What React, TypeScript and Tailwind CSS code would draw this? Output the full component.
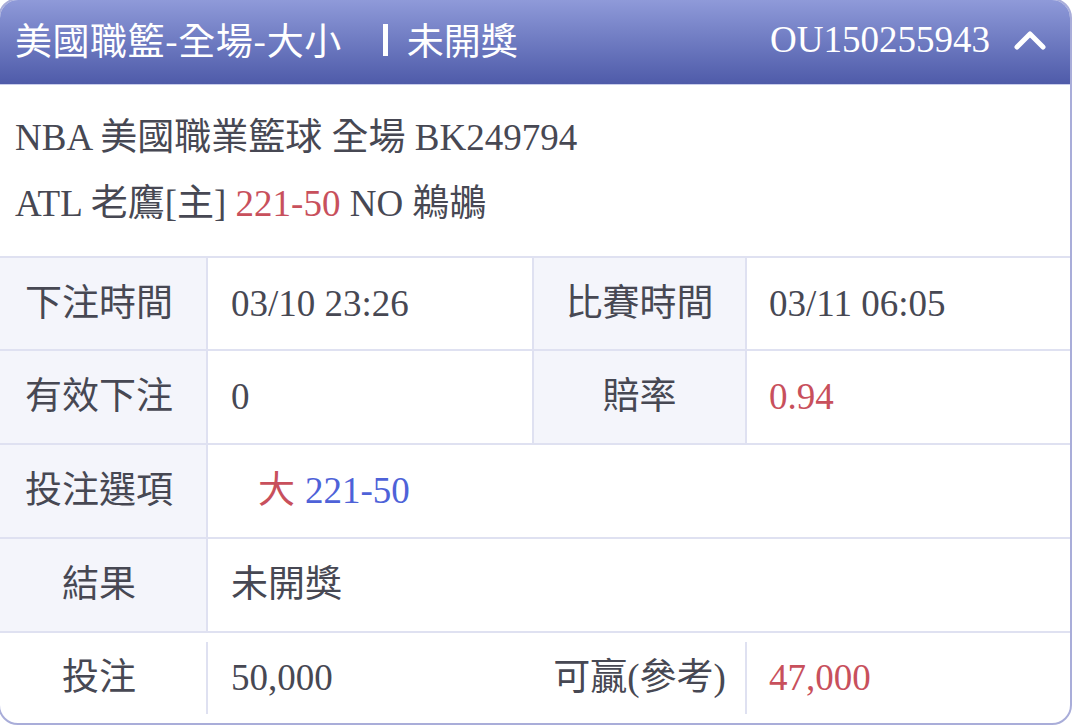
export default function App() {
  const font = "font-['Liberation_Serif','Noto_Sans_CJK_TC',serif]";
  return (
    <div className={`w-[1080px] h-[727px] overflow-hidden bg-white ${font} text-[37px] text-[#474853]`}>
      <div className="-ml-[2px] -mt-[2px] w-[1074px] h-[727px] border-2 border-[#a9add9] rounded-[20px] overflow-hidden flex flex-col bg-white">
        {/* header */}
        <div className="h-[85px] shrink-0 flex items-center pb-[5px] bg-gradient-to-b from-[#8f9ad9] to-[#4f5ba9] text-white border-b border-[#c9cdeb]">
          <div className="pl-[15px] flex items-center leading-none font-['Noto_Sans_CJK_TC',sans-serif] text-[37px]">
            <span className="tracking-[0.5px]">美國職籃-全場-大小</span>
            <span className="ml-[41px] w-[5px] h-[32px] bg-white" />
            <span className="ml-[19px]">未開獎</span>
          </div>
          <div className="ml-auto flex items-center pr-[24px] leading-none">
            <span>OU150255943</span>
            <svg className="ml-[24px]" width="32" height="22" viewBox="0 0 32 22">
              <polyline points="3,18 16,5 29,18" fill="none" stroke="white" strokeWidth="5" strokeLinecap="round" strokeLinejoin="round" />
            </svg>
          </div>
        </div>
        {/* info */}
        <div className="pt-[20px] pb-[19px] pl-[15px] leading-[66px] border-b-2 border-[#dfe1f1]">
          <div>NBA 美國職業籃球 全場 BK249794</div>
          <div>
            ATL 老鷹[主] <span className="text-[#c8505c]">221-50</span> NO 鵜鶘
          </div>
        </div>
        {/* rows */}
        <div className="flex h-[93px] border-b-2 border-[#dfe1f1]">
          <div className="w-[206px] bg-[#f4f5fb] flex items-center justify-center pr-[8px]">下注時間</div>
          <div className="w-[2px] bg-[#dfe1f1]" />
          <div className="w-[324px] flex items-center pl-[23px]">03/10 23:26</div>
          <div className="w-[2px] bg-[#dfe1f1]" />
          <div className="w-[211px] bg-[#f4f5fb] flex items-center justify-center">比賽時間</div>
          <div className="w-[2px] bg-[#dfe1f1]" />
          <div className="flex-1 flex items-center pl-[22px]">03/11 06:05</div>
        </div>
        <div className="flex h-[94px] border-b-2 border-[#dfe1f1]">
          <div className="w-[206px] bg-[#f4f5fb] flex items-center justify-center pr-[8px]">有效下注</div>
          <div className="w-[2px] bg-[#dfe1f1]" />
          <div className="w-[324px] flex items-center pl-[23px]">0</div>
          <div className="w-[2px] bg-[#dfe1f1]" />
          <div className="w-[211px] bg-[#f4f5fb] flex items-center justify-center">賠率</div>
          <div className="w-[2px] bg-[#dfe1f1]" />
          <div className="flex-1 flex items-center pl-[22px] text-[#c8505c]">0.94</div>
        </div>
        <div className="flex h-[94px] border-b-2 border-[#dfe1f1]">
          <div className="w-[206px] bg-[#f4f5fb] flex items-center justify-center pr-[8px]">投注選項</div>
          <div className="w-[2px] bg-[#dfe1f1]" />
          <div className="flex-1 flex items-center pl-[50px]">
            <span className="text-[#c8505c]">大</span>
            <span className="ml-[10px] text-[#4e62d8]">221-50</span>
          </div>
        </div>
        <div className="flex h-[94px] border-b-2 border-[#dfe1f1]">
          <div className="w-[206px] bg-[#f4f5fb] flex items-center justify-center pr-[8px]">結果</div>
          <div className="w-[2px] bg-[#dfe1f1]" />
          <div className="flex-1 flex items-center pl-[23px]">未開獎</div>
        </div>
        <div className="flex flex-1 py-[9px]">
          <div className="w-[206px] flex items-center justify-center pr-[8px]">投注</div>
          <div className="w-[2px] bg-[#dfe1f1]" />
          <div className="w-[324px] flex items-center pl-[23px]">50,000</div>
          <div className="w-[2px] bg-transparent" />
          <div className="w-[211px] flex items-center justify-center">可贏(參考)</div>
          <div className="w-[2px] bg-[#dfe1f1]" />
          <div className="flex-1 flex items-center pl-[22px] text-[#c8505c]">47,000</div>
        </div>
      </div>
    </div>
  );
}
